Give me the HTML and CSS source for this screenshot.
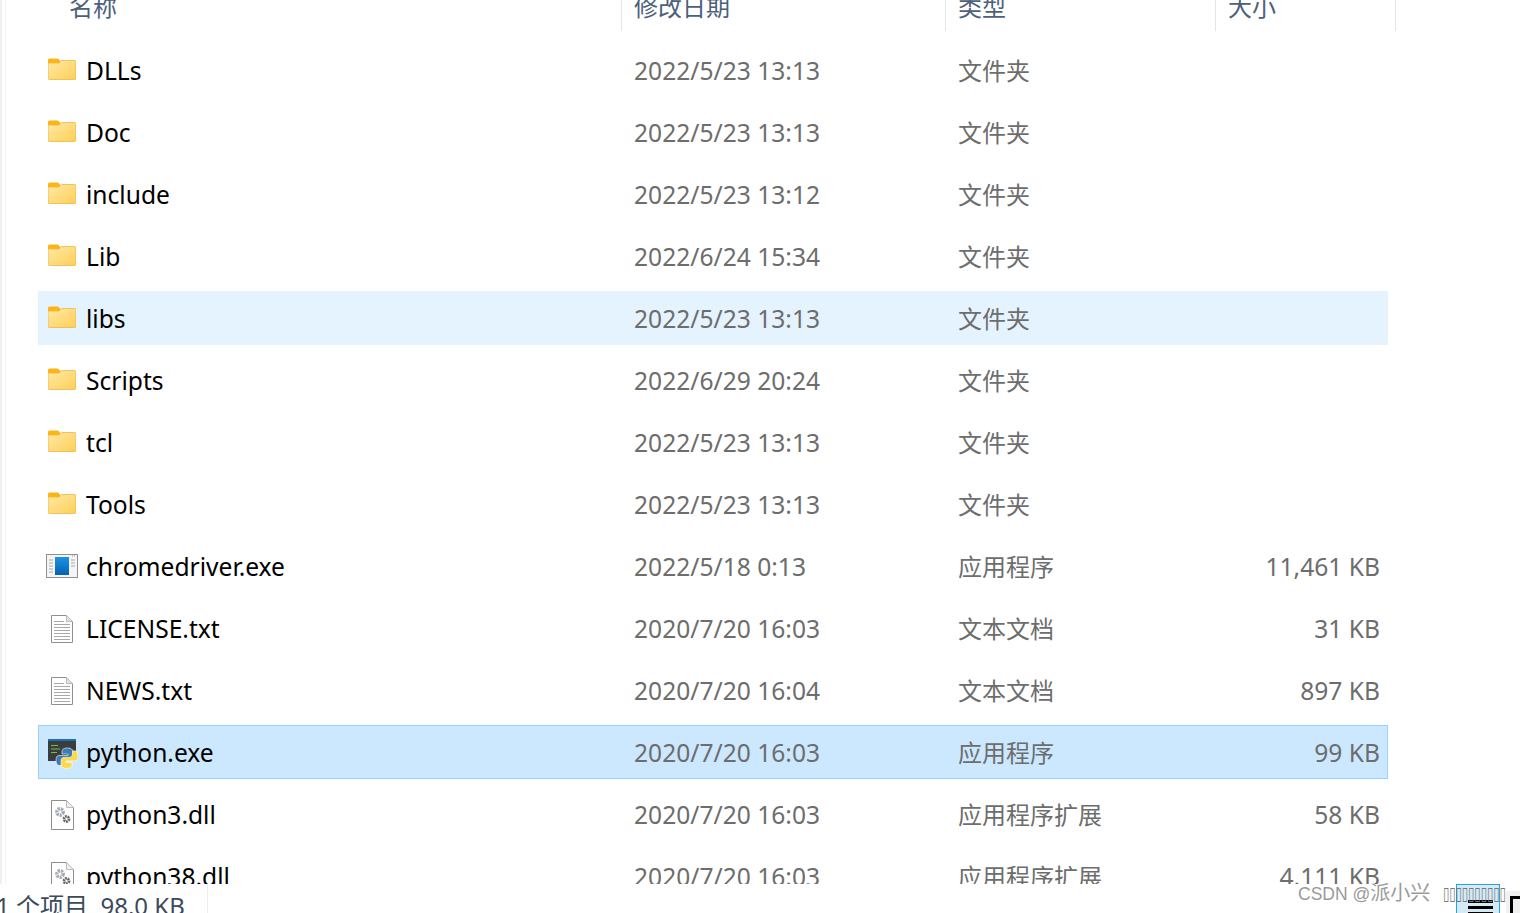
FILE: index.html
```html
<!doctype html>
<html lang="zh-CN">
  <head>
    <meta charset="UTF-8" />
    <title>Python38</title>
    <link rel="stylesheet" href="styles.css">
  </head>
  <body>
    <!-- shared file icons -->
    <svg class="defs" width="0" height="0">
      <defs>
        <linearGradient id="folderFill" x1="0" y1="0" x2="1" y2="1">
          <stop offset="0" stop-color="#ffe9a6" />
          <stop offset="1" stop-color="#fdcf58" />
        </linearGradient>
        <linearGradient id="chromeBlue" x1="0" y1="0" x2="0" y2="1">
          <stop offset="0" stop-color="#1a94e6" />
          <stop offset="1" stop-color="#0562b4" />
        </linearGradient>
        <symbol id="folder" viewBox="0 0 28 22">
          <path d="M0 2a1.500 1.500 0 0 1 1.500-1.500h8.500l2.500 2.500v3h-12.500z" fill="#fbb514" />
          <path d="M0 5h11l2.500-2.500h13a1.500 1.500 0 0 1 1.500 1.500v16a1.500 1.500 0 0 1-1.500 1.500h-25a1.500 1.500 0 0 1-1.500-1.500z" fill="url(#folderFill)" stroke="#eeb640" stroke-width=".8" />
        </symbol>
        <symbol id="exe" viewBox="0 0 32 24">
          <rect x=".5" y=".5" width="31" height="23" fill="#f5f5f5" stroke="#8f8f8f" />
          <rect x="9" y="3" width="14" height="18" fill="url(#chromeBlue)" />
          <path d="M3 6h4M3 9h4M3 12h4M3 15h4M3 18h4M25 6h4M25 9h4M25 12h4" stroke="#a8a8a8" />
          <path d="M26 2h1M28 2h1" stroke="#9a9a9a" />
        </symbol>
        <symbol id="txt" viewBox="0 0 22 28">
          <path d="M.5.500h15l6 6v21h-21z" fill="#fff" stroke="#8f8f8f" />
          <path d="M15.500.500v6h6" fill="#e4e4e4" stroke="#bcbcbc" />
          <path d="M3 6.500h10M3 9.500h16M3 12.500h16M3 15.500h16M3 18.500h16M3 21.500h16M3 24.500h16" stroke="#a9a9a9" />
        </symbol>
        <symbol id="dll" viewBox="0 0 23 30">
          <path d="M.5.500h15l7 7v22h-22z" fill="#fff" stroke="#8d8d8d" />
          <path d="M15.500.500v7h7" fill="#eee" stroke="#bdbdbd" />
          <circle cx="9" cy="12" r="3.200" fill="none" stroke="#a3abb4" stroke-width="3.400" stroke-dasharray="2.200 .9" />
          <circle cx="15.500" cy="19" r="2.500" fill="none" stroke="#666" stroke-width="2.800" stroke-dasharray="1.800 .7" />
        </symbol>
        <symbol id="python" viewBox="0 0 30 30">
          <rect x="0" y="0" width="28" height="22" fill="#3c3c3c" />
          <rect x="0" y="0" width="28" height="2" fill="#1a6fb5" />
          <path d="M3 6.500h7M3 10h9M3 13.500h6" stroke="#6fbf4b" />
          <path d="M19.500 9c-4.500 0-5.500 1.700-5.500 3.500V15h6v1.500H11c-2.500 0-3 2.500-3 5s1 5 3 5h2.500v-3c0-2 1.500-3.500 3.500-3.500h5c1.700 0 3-1.300 3-3v-4.500C25 10.500 23 9 19.500 9z" fill="#3a7cb5" stroke="#fff" stroke-width=".6" />
          <path d="M19.500 9c-4.500 0-5.500 1.700-5.500 3.500V15h6v1.500H11c-2.500 0-3 2.500-3 5s1 5 3 5h2.500v-3c0-2 1.500-3.500 3.500-3.500h5c1.700 0 3-1.300 3-3v-4.500C25 10.500 23 9 19.500 9z" transform="rotate(180 19 19.200)" fill="#fcd94a" stroke="#fff" stroke-width=".6" />
        </symbol>
      </defs>
    </svg>

    <div class="explorer">
      <div class="pane">
        <!-- column headers, cut off by the top of the shot -->
        <div class="header">
          <div class="hcol hcol-name">名称</div>
          <div class="hcol hcol-date">修改日期</div>
          <div class="hcol hcol-type">类型</div>
          <div class="hcol hcol-size">大小</div>
        </div>

        <div class="list">
          <div class="row">
            <div class="name"><svg class="icon icon-folder"><use href="#folder" /></svg>DLLs</div>
            <div class="date">2022/5/23 13:13</div>
            <div class="type">文件夹</div>
            <div class="size"></div>
          </div>
          <div class="row">
            <div class="name"><svg class="icon icon-folder"><use href="#folder" /></svg>Doc</div>
            <div class="date">2022/5/23 13:13</div>
            <div class="type">文件夹</div>
            <div class="size"></div>
          </div>
          <div class="row">
            <div class="name"><svg class="icon icon-folder"><use href="#folder" /></svg>include</div>
            <div class="date">2022/5/23 13:12</div>
            <div class="type">文件夹</div>
            <div class="size"></div>
          </div>
          <div class="row">
            <div class="name"><svg class="icon icon-folder"><use href="#folder" /></svg>Lib</div>
            <div class="date">2022/6/24 15:34</div>
            <div class="type">文件夹</div>
            <div class="size"></div>
          </div>
          <div class="row hover">
            <div class="name"><svg class="icon icon-folder"><use href="#folder" /></svg>libs</div>
            <div class="date">2022/5/23 13:13</div>
            <div class="type">文件夹</div>
            <div class="size"></div>
          </div>
          <div class="row">
            <div class="name"><svg class="icon icon-folder"><use href="#folder" /></svg>Scripts</div>
            <div class="date">2022/6/29 20:24</div>
            <div class="type">文件夹</div>
            <div class="size"></div>
          </div>
          <div class="row">
            <div class="name"><svg class="icon icon-folder"><use href="#folder" /></svg>tcl</div>
            <div class="date">2022/5/23 13:13</div>
            <div class="type">文件夹</div>
            <div class="size"></div>
          </div>
          <div class="row">
            <div class="name"><svg class="icon icon-folder"><use href="#folder" /></svg>Tools</div>
            <div class="date">2022/5/23 13:13</div>
            <div class="type">文件夹</div>
            <div class="size"></div>
          </div>
          <div class="row">
            <div class="name"><svg class="icon icon-exe"><use href="#exe" /></svg>chromedriver.exe</div>
            <div class="date">2022/5/18 0:13</div>
            <div class="type">应用程序</div>
            <div class="size">11,461 KB</div>
          </div>
          <div class="row">
            <div class="name"><svg class="icon icon-txt"><use href="#txt" /></svg>LICENSE.txt</div>
            <div class="date">2020/7/20 16:03</div>
            <div class="type">文本文档</div>
            <div class="size">31 KB</div>
          </div>
          <div class="row">
            <div class="name"><svg class="icon icon-txt"><use href="#txt" /></svg>NEWS.txt</div>
            <div class="date">2020/7/20 16:04</div>
            <div class="type">文本文档</div>
            <div class="size">897 KB</div>
          </div>
          <div class="row selected">
            <div class="name"><svg class="icon icon-python"><use href="#python" /></svg>python.exe</div>
            <div class="date">2020/7/20 16:03</div>
            <div class="type">应用程序</div>
            <div class="size">99 KB</div>
          </div>
          <div class="row">
            <div class="name"><svg class="icon icon-dll"><use href="#dll" /></svg>python3.dll</div>
            <div class="date">2020/7/20 16:03</div>
            <div class="type">应用程序扩展</div>
            <div class="size">58 KB</div>
          </div>
          <div class="row">
            <div class="name"><svg class="icon icon-dll"><use href="#dll" /></svg>python38.dll</div>
            <div class="date">2020/7/20 16:03</div>
            <div class="type">应用程序扩展</div>
            <div class="size">4,111 KB</div>
          </div>
        </div>
      </div>

      <!-- status bar, also cut off -->
      <div class="status">
        <div class="status-text">1 个项目&nbsp;&nbsp;98.0 KB</div>
        <div class="view-btn view-details">
          <span></span><span></span><span></span>
        </div>
        <div class="view-tiles"><div class="view-tiles-box"></div></div>
      </div>
    </div>

    <div class="watermark">CSDN @<span class="watermark-cn">派小兴</span><span class="tofu">▯▯▯▯▯▯▯▯▯▯</span></div>
  </body>
</html>
```

FILE: styles.css
```css
/* Zoomed-in file explorer window */
html,
body {
  margin: 0;
  height: 100%;
  background-color: #fff;
  overflow: hidden;
}

body {
  font-family: "Noto Sans", "Noto Sans CJK SC", sans-serif;
  position: relative;
}

.defs {
  position: absolute;
}

.explorer {
  height: 913px;
  display: flex;
  flex-direction: column;
}

.pane {
  height: 884px;
  flex: none;
  overflow: hidden;
  box-sizing: border-box;
  padding-left: 3px;
  border-left: 2px solid #f0f0f0;
  background: linear-gradient(#f3f3f3, #f3f3f3) 3px 0 / 1px 100% no-repeat;
}

/* Column headers */
.header {
  display: grid;
  grid-template-columns: 584px 324px 270px 180px;
  height: 31px;
  margin-left: 33px;
  margin-bottom: 12px;
  overflow: hidden;
  font-family: "Noto Sans CJK SC", sans-serif;
  font-size: 24px;
  line-height: 24px;
  color: #4c607a;
}

.hcol {
  border-right: 1px solid #e5e5e5;
  box-sizing: border-box;
  margin-top: -6px;
  padding-left: 12px;
  height: 37px;
}

.hcol-name {
  padding-left: 31px;
}

/* File rows */
.list {
  margin-left: 33px;
  width: 1350px;
  display: flex;
  flex-direction: column;
  gap: 8px;
}

.row {
  display: grid;
  grid-template-columns: 583px 324px 270px 173px;
  height: 54px;
  align-items: center;
  font-size: 24.6px;
  color: #6d6d6d;
}

.row.hover {
  background-color: #e5f3ff;
}

.row.selected {
  background-color: #cce8ff;
  box-shadow: inset 0 0 0 1px #99d1ff;
}

.name {
  display: flex;
  align-items: center;
  color: #000;
  padding-left: 48px;
  position: relative;
}

.date {
  padding-left: 13px;
}

.type {
  padding-left: 13px;
  padding-bottom: 2px;
  font-family: "Noto Sans CJK SC", sans-serif;
  font-size: 24px;
}

.size {
  text-align: right;
  padding-right: 8px;
}

.icon {
  position: absolute;
}

.icon-folder {
  left: 10px;
  top: 4px;
  width: 28px;
  height: 22px;
}

.icon-exe {
  left: 8px;
  top: 4px;
  width: 32px;
  height: 24px;
}

.icon-txt {
  left: 13px;
  top: 3px;
  width: 22px;
  height: 28px;
}

.icon-dll {
  left: 13px;
  top: 2px;
  width: 23px;
  height: 30px;
}

.icon-python {
  left: 10px;
  top: 3px;
  width: 30px;
  height: 30px;
}

/* Status bar */
.status {
  flex: 1;
  display: flex;
  align-items: flex-start;
  overflow: hidden;
}

.status-text {
  flex: none;
  width: 208px;
  height: 29px;
  font-size: 24px;
  line-height: 44px;
  text-indent: -4px;
  color: #3c4a5c;
  border-right: 1px solid #eee;
  box-sizing: border-box;
  white-space: nowrap;
}

.view-btn {
  flex: none;
  box-sizing: border-box;
  height: 40px;
}

.view-details {
  margin-left: 1248px;
  width: 44px;
  background-color: #d5eaf7;
  border: 1px solid #29a3e0;
  padding: 15px 6px 0 11px;
}

.view-details span {
  display: block;
  height: 3px;
  background-color: #000;
  margin-bottom: 3px;
}

.view-tiles {
  flex: none;
  margin-left: 6px;
  margin-top: 7px;
  width: 14px;
  height: 30px;
  background-color: #f1f1f1;
  border-radius: 3px 0 0 0;
  padding: 5px 0 0 4px;
  box-sizing: border-box;
}

.view-tiles-box {
  height: 30px;
  border: solid #000;
  border-width: 3px 0 0 3px;
}

/* CSDN watermark on top of the shot */
.watermark {
  position: absolute;
  left: 1298px;
  top: 880px;
  font-family: "Liberation Sans", "Noto Sans CJK SC", sans-serif;
  font-size: 17.5px;
  line-height: 26px;
  color: #9a9a9a;
  white-space: nowrap;
}

.watermark-cn {
  font-size: 20px;
}

.tofu {
  display: inline-block;
  margin-left: 13px;
  font-family: "DejaVu Sans", sans-serif;
  font-size: 19px;
  color: #777;
  transform: scaleX(.6);
  transform-origin: left center;
}
```
